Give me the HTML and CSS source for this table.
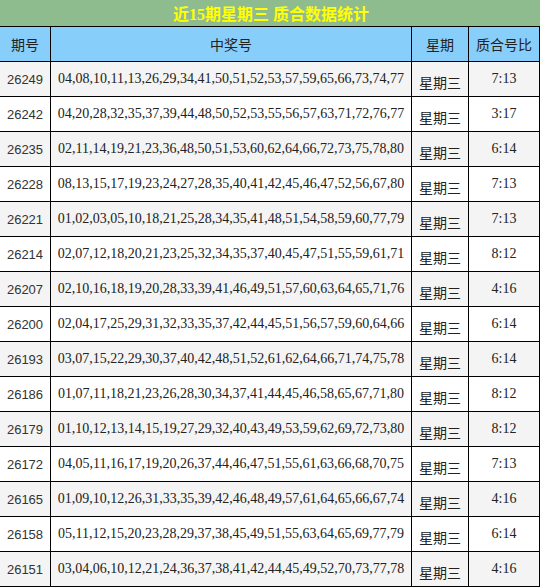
FILE: index.html
```html
<!DOCTYPE html>
<html lang="zh">
<head>
<meta charset="utf-8">
<title>近15期星期三 质合数据统计</title>
<link rel="stylesheet" href="styles.css">
</head>
<body>
<div class="table">
  <div class="title">近15期星期三 质合数据统计</div>
  <div class="cell head">期号</div>
  <div class="cell head">中奖号</div>
  <div class="cell head">星期</div>
  <div class="cell head">质合号比</div>

  <div class="cell issue odd">26249</div><div class="cell nums odd">04,08,10,11,13,26,29,34,41,50,51,52,53,57,59,65,66,73,74,77</div><div class="cell day odd">星期三</div><div class="cell ratio odd">7:13</div>
  <div class="cell issue">26242</div><div class="cell nums">04,20,28,32,35,37,39,44,48,50,52,53,55,56,57,63,71,72,76,77</div><div class="cell day">星期三</div><div class="cell ratio">3:17</div>
  <div class="cell issue odd">26235</div><div class="cell nums odd">02,11,14,19,21,23,36,48,50,51,53,60,62,64,66,72,73,75,78,80</div><div class="cell day odd">星期三</div><div class="cell ratio odd">6:14</div>
  <div class="cell issue">26228</div><div class="cell nums">08,13,15,17,19,23,24,27,28,35,40,41,42,45,46,47,52,56,67,80</div><div class="cell day">星期三</div><div class="cell ratio">7:13</div>
  <div class="cell issue odd">26221</div><div class="cell nums odd">01,02,03,05,10,18,21,25,28,34,35,41,48,51,54,58,59,60,77,79</div><div class="cell day odd">星期三</div><div class="cell ratio odd">7:13</div>
  <div class="cell issue">26214</div><div class="cell nums">02,07,12,18,20,21,23,25,32,34,35,37,40,45,47,51,55,59,61,71</div><div class="cell day">星期三</div><div class="cell ratio">8:12</div>
  <div class="cell issue odd">26207</div><div class="cell nums odd">02,10,16,18,19,20,28,33,39,41,46,49,51,57,60,63,64,65,71,76</div><div class="cell day odd">星期三</div><div class="cell ratio odd">4:16</div>
  <div class="cell issue">26200</div><div class="cell nums">02,04,17,25,29,31,32,33,35,37,42,44,45,51,56,57,59,60,64,66</div><div class="cell day">星期三</div><div class="cell ratio">6:14</div>
  <div class="cell issue odd">26193</div><div class="cell nums odd">03,07,15,22,29,30,37,40,42,48,51,52,61,62,64,66,71,74,75,78</div><div class="cell day odd">星期三</div><div class="cell ratio odd">6:14</div>
  <div class="cell issue">26186</div><div class="cell nums">01,07,11,18,21,23,26,28,30,34,37,41,44,45,46,58,65,67,71,80</div><div class="cell day">星期三</div><div class="cell ratio">8:12</div>
  <div class="cell issue odd">26179</div><div class="cell nums odd">01,10,12,13,14,15,19,27,29,32,40,43,49,53,59,62,69,72,73,80</div><div class="cell day odd">星期三</div><div class="cell ratio odd">8:12</div>
  <div class="cell issue">26172</div><div class="cell nums">04,05,11,16,17,19,20,26,37,44,46,47,51,55,61,63,66,68,70,75</div><div class="cell day">星期三</div><div class="cell ratio">7:13</div>
  <div class="cell issue odd">26165</div><div class="cell nums odd">01,09,10,12,26,31,33,35,39,42,46,48,49,57,61,64,65,66,67,74</div><div class="cell day odd">星期三</div><div class="cell ratio odd">4:16</div>
  <div class="cell issue">26158</div><div class="cell nums">05,11,12,15,20,23,28,29,37,38,45,49,51,55,63,64,65,69,77,79</div><div class="cell day">星期三</div><div class="cell ratio">6:14</div>
  <div class="cell issue odd">26151</div><div class="cell nums odd">03,04,06,10,12,21,24,36,37,38,41,42,44,45,49,52,70,73,77,78</div><div class="cell day odd">星期三</div><div class="cell ratio odd">4:16</div>
</div>
</body>
</html>
```
FILE: styles.css
```css
html, body {
  margin: 0;
  padding: 0;
  background: #ffffff;
}

.table {
  display: grid;
  grid-template-columns: 51px 361px 57px 71px;
  grid-template-rows: 27px;
  grid-auto-rows: 35px;
  width: 540px;
  font-family: "Liberation Serif", "Noto Sans CJK SC", serif;
  font-size: 14px;
  color: #222222;
}

.title {
  grid-column: 1 / -1;
  border-bottom: 1px solid #000000;
  background: #8fbc8f;
  color: #ffff00;
  font-weight: bold;
  font-size: 16px;
  display: flex;
  align-items: center;
  justify-content: center;
  padding-left: 2px;
}

.cell {
  border-right: 1px solid #000000;
  border-bottom: 1px solid #000000;
  display: flex;
  align-items: center;
  justify-content: center;
  white-space: nowrap;
  background: #ffffff;
  box-sizing: border-box;
}

.odd {
  background: #f4f4f4;
}

.head {
  background: #87cefa;
  font-family: "Noto Sans CJK SC", sans-serif;
  font-size: 14px;
  color: #222222;
}

.issue {
  font-family: "Liberation Sans", "Noto Sans", sans-serif;
  font-size: 13px;
  color: #333333;
}

.nums {
  font-size: 14px;
}

.day {
  font-family: "Noto Sans CJK SC", sans-serif;
  padding-top: 6px;
}
```
